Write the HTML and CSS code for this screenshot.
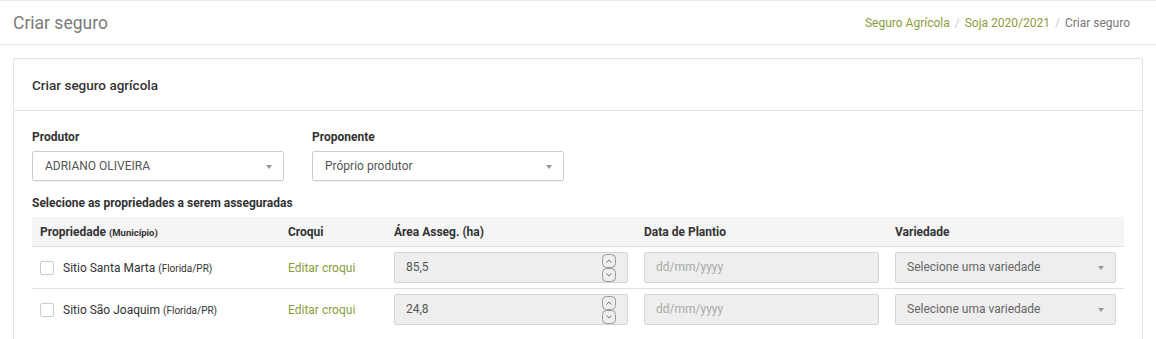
FILE: index.html
```html
<!DOCTYPE html>
<html lang="pt-BR">
<head>
    <meta charset="UTF-8">
    <title>Criar seguro</title>
    <link rel="stylesheet" href="styles.css">
</head>
<body>
    <header class="page-header">
        <h1>Criar seguro</h1>
        <ol class="breadcrumb">
            <li><a href="#">Seguro Agrícola</a></li>
            <li><a href="#">Soja 2020/2021</a></li>
            <li class="active">Criar seguro</li>
        </ol>
    </header>

    <main class="content">
        <section class="card">
            <div class="card-header">Criar seguro agrícola</div>
            <div class="card-body">
                <div class="form-row">
                    <div class="form-group">
                        <label>Produtor</label>
                        <div class="select">ADRIANO OLIVEIRA</div>
                    </div>
                    <div class="form-group">
                        <label>Proponente</label>
                        <div class="select">Próprio produtor</div>
                    </div>
                </div>

                <p class="section-label">Selecione as propriedades a serem asseguradas</p>

                <table class="props">
                    <colgroup>
                        <col style="width:248px">
                        <col style="width:106px">
                        <col style="width:250px">
                        <col style="width:251px">
                        <col>
                    </colgroup>
                    <thead>
                        <tr>
                            <th>Propriedade <small>(Município)</small></th>
                            <th>Croqui</th>
                            <th>Área Asseg. (ha)</th>
                            <th>Data de Plantio</th>
                            <th>Variedade</th>
                        </tr>
                    </thead>
                    <tbody>
                        <tr>
                            <td><span class="check"></span>Sitio Santa Marta <small>(Florida/PR)</small></td>
                            <td><a href="#">Editar croqui</a></td>
                            <td>
                                <div class="field">85,5
                                    <svg class="spin" width="14" height="28" viewBox="0 0 14 28">
                                        <rect x="0.5" y="0.5" width="13" height="13" rx="4" fill="none" stroke="#999"/>
                                        <rect x="0.5" y="14.5" width="13" height="13" rx="4" fill="none" stroke="#999"/>
                                        <path d="M4.5 8.5 L7 6 L9.5 8.5" fill="none" stroke="#777"/>
                                        <path d="M4.5 19.5 L7 22 L9.5 19.5" fill="none" stroke="#777"/>
                                    </svg>
                                </div>
                            </td>
                            <td><div class="field placeholder">dd/mm/yyyy</div></td>
                            <td><div class="field select-field">Selecione uma variedade</div></td>
                        </tr>
                        <tr>
                            <td><span class="check"></span>Sitio São Joaquim <small>(Florida/PR)</small></td>
                            <td><a href="#">Editar croqui</a></td>
                            <td>
                                <div class="field">24,8
                                    <svg class="spin" width="14" height="28" viewBox="0 0 14 28">
                                        <rect x="0.5" y="0.5" width="13" height="13" rx="4" fill="none" stroke="#999"/>
                                        <rect x="0.5" y="14.5" width="13" height="13" rx="4" fill="none" stroke="#999"/>
                                        <path d="M4.5 8.5 L7 6 L9.5 8.5" fill="none" stroke="#777"/>
                                        <path d="M4.5 19.5 L7 22 L9.5 19.5" fill="none" stroke="#777"/>
                                    </svg>
                                </div>
                            </td>
                            <td><div class="field placeholder">dd/mm/yyyy</div></td>
                            <td><div class="field select-field">Selecione uma variedade</div></td>
                        </tr>
                    </tbody>
                </table>
            </div>
        </section>
    </main>
</body>
</html>
```

FILE: styles.css
```css
body {
    margin: 0;
    font-family: Roboto, "Liberation Sans", Arial, sans-serif;
    font-size: 12px;
    color: #333;
    background: #fff;
    overflow: hidden;
}

a {
    color: #8a9d3b;
    text-decoration: none;
}

.page-header {
    display: flex;
    justify-content: space-between;
    align-items: center;
    height: 43px;
    padding: 0 26px 0 13px;
    border-top: 1px solid #e8e8e8;
    border-bottom: 1px solid #e5e5e5;
}

.page-header h1 {
    margin: 0;
    font-size: 17.5px;
    font-weight: 400;
    color: #7a7a7a;
}

.breadcrumb {
    display: flex;
    margin: 0;
    padding: 0;
    list-style: none;
    font-size: 12px;
}

.breadcrumb li + li::before {
    content: "/";
    color: #ccc;
    padding: 0 5px;
}

.breadcrumb .active {
    color: #777;
}

.content {
    padding: 13px 13px 0;
}

.card {
    border: 1px solid #e3e3e3;
    border-radius: 2px;
}

.card-header {
    padding: 18px 18px 17px;
    font-weight: 500;
    font-size: 13.5px;
    line-height: 16px;
    border-bottom: 1px solid #e3e3e3;
}

.card-body {
    padding: 19px 18px 20px;
}

.form-row {
    display: flex;
    gap: 28px;
}

.form-group label {
    display: block;
    font-weight: 700;
    margin-bottom: 6px;
    line-height: 15px;
}

.select {
    position: relative;
    box-sizing: border-box;
    width: 252px;
    height: 30px;
    line-height: 28px;
    padding: 0 12px;
    border: 1px solid #ccc;
    border-radius: 2px;
    color: #555;
    box-shadow: 0 1px 1px rgba(0, 0, 0, 0.06);
}

.select::after,
.select-field::after {
    content: "";
    position: absolute;
    right: 11px;
    top: 13px;
    border-top: 4px solid #999;
    border-left: 3px solid transparent;
    border-right: 3px solid transparent;
}

.section-label {
    margin: 15px 0 6px;
    font-weight: 700;
    line-height: 15px;
}

.props {
    width: 100%;
    border-collapse: collapse;
    table-layout: fixed;
}

.props th {
    text-align: left;
    font-weight: 700;
    background: #f5f5f5;
    padding: 7px 8px;
    height: 15px;
    border-bottom: 1px solid #e0e0e0;
}

.props td {
    padding: 5px 8px;
    border-bottom: 1px solid #e0e0e0;
}

.props tbody tr:last-child td {
    border-bottom: 0;
}

.props small {
    font-size: 10px;
}

.props th small {
    font-size: 9.5px;
    font-weight: 700;
}

.check {
    display: inline-block;
    vertical-align: -3px;
    width: 12px;
    height: 12px;
    border: 1px solid #ccc;
    border-radius: 2px;
    margin-right: 9px;
}

.field {
    position: relative;
    box-sizing: border-box;
    height: 31px;
    line-height: 29px;
    padding: 0 11px;
    background: #eee;
    border: 1px solid #d4d4d4;
    border-radius: 2px;
    color: #555;
}

.placeholder {
    color: #aaa;
}

.select-field {
    color: #666;
}

.spin {
    position: absolute;
    right: 11px;
    top: 1px;
}
```
